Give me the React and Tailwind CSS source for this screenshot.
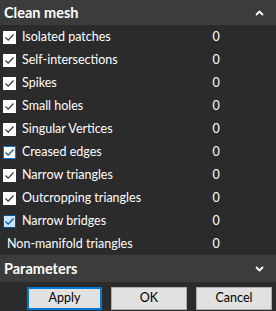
import React from 'react';

const rows = [
  { label: 'Isolated patches', state: 'on' },
  { label: 'Self-intersections', state: 'on' },
  { label: 'Spikes', state: 'on' },
  { label: 'Small holes', state: 'on' },
  { label: 'Singular Vertices', state: 'on' },
  { label: 'Creased edges', state: 'focus' },
  { label: 'Narrow triangles', state: 'on' },
  { label: 'Outcropping triangles', state: 'on' },
  { label: 'Narrow bridges', state: 'hover' },
];

function Check({ state }) {
  const box =
    state === 'hover'
      ? 'bg-[#cce4f7] border-[#005499]'
      : state === 'focus'
      ? 'bg-white border-[#0078d7]'
      : 'bg-white border-white';
  const stroke = state === 'on' ? '#333333' : '#005499';
  return (
    <span className={`w-[13px] h-[13px] border flex items-center justify-center shrink-0 ${box}`}>
      <svg width="11" height="11" viewBox="0 0 11 11">
        <path d="M1.5 5.5 L4.2 8.2 L9.5 2.5" fill="none" stroke={stroke} strokeWidth="1.2" />
      </svg>
    </span>
  );
}

function Chevron({ up }) {
  return (
    <svg width="9" height="6" viewBox="0 0 9 6" className="mr-[12px]">
      <path
        d={up ? 'M1 5 L4.5 1.5 L8 5' : 'M1 1 L4.5 4.5 L8 1'}
        fill="none"
        stroke="#ffffff"
        strokeWidth="1.8"
      />
    </svg>
  );
}

export default function App() {
  return (
    <div className="w-[276px] h-[311px] bg-[#2b2b2b] text-white text-[12.5px] flex flex-col font-['Lato',sans-serif] overflow-hidden">
      <div className="h-[25px] bg-[#3c3c3c] flex items-center justify-between pl-[4px] shrink-0">
        <span className="font-bold text-[14.5px]">Clean mesh</span>
        <Chevron up />
      </div>
      {rows.map((r) => (
        <div key={r.label} className="h-[23px] flex items-center shrink-0 pt-[1px]">
          <div className="w-[190px] flex items-center gap-[6px] pl-[3px]">
            <Check state={r.state} />
            <span>{r.label}</span>
          </div>
          <span className="w-[52px] text-center">0</span>
        </div>
      ))}
      <div className="h-[23px] flex items-center shrink-0 pt-[1px]">
        <span className="w-[190px] pl-[7px]">Non-manifold triangles</span>
        <span className="w-[52px] text-center">0</span>
      </div>
      <div className="h-[27px] bg-[#3c3c3c] flex items-center justify-between pl-[4px] shrink-0">
        <span className="font-bold text-[14.5px]">Parameters</span>
        <Chevron />
      </div>
      <div className="flex gap-[9px] pl-[27px] pt-[5px]">
        <button className="w-[75px] h-[23px] bg-[#e1e1e1] border-2 border-[#0078d7] text-black">Apply</button>
        <button className="w-[76px] h-[23px] bg-[#e1e1e1] border border-[#adadad] text-black">OK</button>
        <button className="w-[76px] h-[23px] bg-[#e1e1e1] border border-[#adadad] text-black">Cancel</button>
      </div>
    </div>
  );
}
